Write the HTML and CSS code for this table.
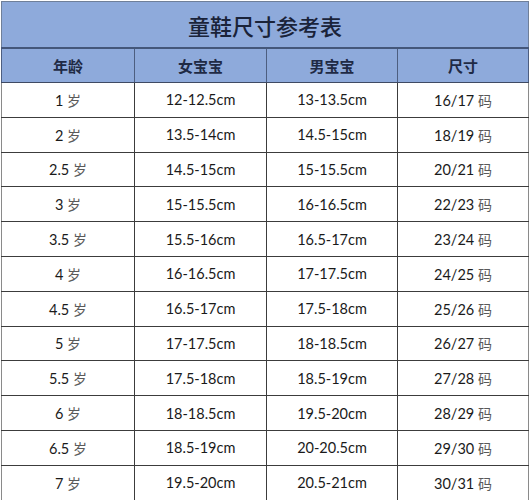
FILE: index.html
```html
<!DOCTYPE html>
<html lang="zh">
<head>
<meta charset="utf-8">
<title>童鞋尺寸参考表</title>
<link rel="stylesheet" href="styles.css">
</head>
<body>
<div class="sheet">
<table class="size-table">
  <colgroup>
    <col class="c1"><col class="c2"><col class="c3"><col class="c4">
  </colgroup>
  <thead>
    <tr class="title-row"><th colspan="4">童鞋尺寸参考表</th></tr>
    <tr class="head-row"><th>年龄</th><th>女宝宝</th><th>男宝宝</th><th>尺寸</th></tr>
  </thead>
  <tbody>
    <tr><td>1 <span class="u">岁</span></td><td>12-12.5cm</td><td>13-13.5cm</td><td>16/17 <span class="u">码</span></td></tr>
    <tr><td>2 <span class="u">岁</span></td><td>13.5-14cm</td><td>14.5-15cm</td><td>18/19 <span class="u">码</span></td></tr>
    <tr><td>2.5 <span class="u">岁</span></td><td>14.5-15cm</td><td>15-15.5cm</td><td>20/21 <span class="u">码</span></td></tr>
    <tr><td>3 <span class="u">岁</span></td><td>15-15.5cm</td><td>16-16.5cm</td><td>22/23 <span class="u">码</span></td></tr>
    <tr><td>3.5 <span class="u">岁</span></td><td>15.5-16cm</td><td>16.5-17cm</td><td>23/24 <span class="u">码</span></td></tr>
    <tr><td>4 <span class="u">岁</span></td><td>16-16.5cm</td><td>17-17.5cm</td><td>24/25 <span class="u">码</span></td></tr>
    <tr><td>4.5 <span class="u">岁</span></td><td>16.5-17cm</td><td>17.5-18cm</td><td>25/26 <span class="u">码</span></td></tr>
    <tr><td>5 <span class="u">岁</span></td><td>17-17.5cm</td><td>18-18.5cm</td><td>26/27 <span class="u">码</span></td></tr>
    <tr><td>5.5 <span class="u">岁</span></td><td>17.5-18cm</td><td>18.5-19cm</td><td>27/28 <span class="u">码</span></td></tr>
    <tr><td>6 <span class="u">岁</span></td><td>18-18.5cm</td><td>19.5-20cm</td><td>28/29 <span class="u">码</span></td></tr>
    <tr><td>6.5 <span class="u">岁</span></td><td>18.5-19cm</td><td>20-20.5cm</td><td>29/30 <span class="u">码</span></td></tr>
    <tr><td>7 <span class="u">岁</span></td><td>19.5-20cm</td><td>20.5-21cm</td><td>30/31 <span class="u">码</span></td></tr>
  </tbody>
</table>
</div>
</body>
</html>
```

FILE: styles.css
```css
html, body {
  margin: 0;
  padding: 0;
  background: #ffffff;
}

.sheet {
  padding: 1px 0 0 1px;
  width: 532px;
  height: 500px;
  overflow: hidden;
  box-sizing: border-box;
}

.size-table {
  border-collapse: collapse;
  table-layout: fixed;
  width: 527px;
  font-family: Lato, "Noto Sans", "Noto Sans CJK SC", sans-serif;
  font-size: 14.5px;
  color: #1a1a1a;
}

.c1 { width: 133px; }
.c2 { width: 132px; }
.c3 { width: 131px; }
.c4 { width: 131px; }

.size-table th,
.size-table td {
  border: 1px solid #3a3a3a;
  padding: 0;
  text-align: center;
  vertical-align: middle;
}

.title-row th {
  height: 45px;
  background: #8eaadb;
  border: 1px solid #6f7f99;
  border-bottom: 2px solid #44577a;
  font-family: "Noto Sans CJK SC", sans-serif;
  font-size: 22px;
  font-weight: 500;
  color: #1a2339;
}

.head-row th {
  height: 33px;
  background: #8eaadb;
  border-color: #4d5e80;
  border-bottom: 1px solid #3f4a63;
  font-family: "Noto Sans CJK SC", sans-serif;
  font-size: 15px;
  font-weight: 700;
  color: #1f2a45;
}

.size-table tbody td {
  height: 33.8px;
  border-color: #3c3c3c;
}

.size-table tbody tr td:first-child { border-left-color: #8a8a8a; }
.size-table tbody tr td:last-child { border-right-color: #8a8a8a; }

.u {
  font-family: "Noto Sans CJK SC", sans-serif;
  font-weight: 400;
  color: #5a5a5a;
  font-size: 14px;
}
```
